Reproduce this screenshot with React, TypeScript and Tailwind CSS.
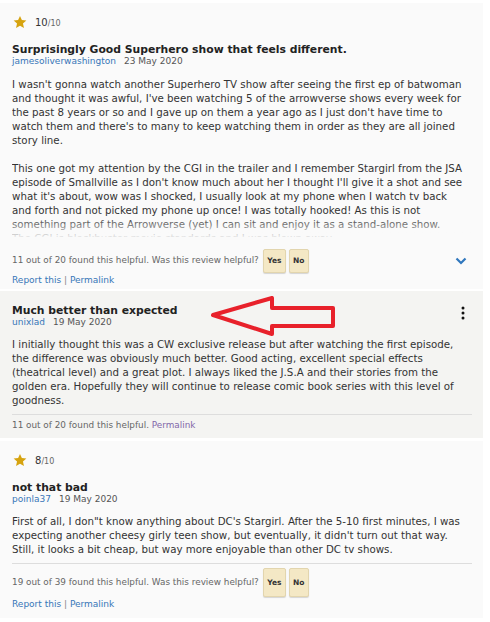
import React from 'react'

type Review = {
  rating?: string
  title: string
  author: string
  date: string
  // lines as laid out in the original, paragraphs split by an empty string
  lines: string[]
}

function Star() {
  return (
    <svg width="14" height="14" viewBox="0 0 24 24" className="shrink-0">
      <path
        d="M12 1.5l3.2 7.1 7.7.8-5.8 5.2 1.7 7.6L12 18.3l-6.8 3.9 1.7-7.6L1.1 9.4l7.7-.8z"
        fill="#d6a30f"
      />
    </svg>
  )
}

function Rating({ value }: { value: string }) {
  return (
    <div className="flex h-4 items-center gap-2 pl-px">
      <Star />
      <span className="text-[10px] text-[#333]">
        {value}
        <span className="text-[8px] text-[#666]">/10</span>
      </span>
    </div>
  )
}

function VoteButtons({ tall }: { tall?: boolean }) {
  const base =
    'flex items-center justify-center rounded-[2px] border border-[#e2d5ae] bg-[#f4e8c5] text-[7.5px] font-bold text-[#333] shadow-[0_1px_1px_rgba(0,0,0,0.15)]'
  return (
    <div className="ml-1 flex gap-[3px]">
      <div className={`${base} w-[23px] ${tall ? 'h-[29px]' : 'h-6'}`}>Yes</div>
      <div className={`${base} w-5 ${tall ? 'h-[29px]' : 'h-6'}`}>No</div>
    </div>
  )
}

function Header({ review }: { review: Review }) {
  return (
    <>
      <h3 className="text-[10.8px] leading-[14px] font-bold text-[#222]">{review.title}</h3>
      <div className="flex h-[10px] items-center text-[9px]">
        <span className="text-[#3776b8]">{review.author}</span>
        <span className="ml-2 text-[#555]">{review.date}</span>
      </div>
    </>
  )
}

function Body({ lines }: { lines: string[] }) {
  return (
    <>
      {lines.map((line, i) => (
        <div key={i} className="h-[14px] whitespace-nowrap">
          {line}
        </div>
      ))}
    </>
  )
}

function Links() {
  return (
    <div className="text-[9px] leading-[12px] text-[#3776b8]">
      Report this <span className="text-[#888]">|</span> Permalink
    </div>
  )
}

const reviews: Review[] = [
  {
    rating: '10',
    title: 'Surprisingly Good Superhero show that feels different.',
    author: 'jamesoliverwashington',
    date: '23 May 2020',
    lines: [
      "I wasn't gonna watch another Superhero TV show after seeing the first ep of batwoman",
      "and thought it was awful, I've been watching 5 of the arrowverse shows every week for",
      "the past 8 years or so and I gave up on them a year ago as I just don't have time to",
      "watch them and there's to many to keep watching them in order as they are all joined",
      'story line.',
      '',
      'This one got my attention by the CGI in the trailer and I remember Stargirl from the JSA',
      "episode of Smallville as I don't know much about her I thought I'll give it a shot and see",
      "what it's about, wow was I shocked, I usually look at my phone when I watch tv back",
      'and forth and not picked my phone up once! I was totally hooked! As this is not',
      'something part of the Arrowverse (yet) I can sit and enjoy it as a stand-alone show.',
      'The CGI is blockbuster movie standards and I was blown away.',
    ],
  },
  {
    title: 'Much better than expected',
    author: 'unixlad',
    date: '19 May 2020',
    lines: [
      'I initially thought this was a CW exclusive release but after watching the first episode,',
      'the difference was obviously much better. Good acting, excellent special effects',
      '(theatrical level) and a great plot. I always liked the J.S.A and their stories from the',
      'golden era. Hopefully they will continue to release comic book series with this level of',
      'goodness.',
    ],
  },
  {
    rating: '8',
    title: 'not that bad',
    author: 'poinla37',
    date: '19 May 2020',
    lines: [
      'First of all, I don"t know anything about DC\'s Stargirl. After the 5-10 first minutes, I was',
      "expecting another cheesy girly teen show, but eventually, it didn't turn out that way.",
      'Still, it looks a bit cheap, but way more enjoyable than other DC tv shows.',
    ],
  },
]

const bodyText = 'text-[10.25px] leading-[14px] text-[#333]'

export default function App() {
  const [first, second, third] = reviews

  return (
    <div className="min-h-screen w-[490px] bg-white pt-[3px] font-['DejaVu_Sans',sans-serif]">
      {/* collapsed review */}
      <div className="w-[483px] bg-[#fafafa] pt-[11px] pr-[11px] pb-[3px] pl-3">
        <Rating value={first.rating!} />
        <div className="mt-[13px]">
          <Header review={first} />
        </div>
        <div className={`relative mt-[10px] h-[160px] overflow-hidden ${bodyText}`}>
          <Body lines={first.lines} />
          <div className="absolute inset-x-0 bottom-0 h-5 bg-gradient-to-b from-[#fafafa]/0 to-[#fafafa]/90" />
        </div>
        <div className="mt-3 flex items-center">
          <span className="text-[8.85px] text-[#666]">
            11 out of 20 found this helpful. Was this review helpful?
          </span>
          <VoteButtons />
          <svg width="12" height="8" viewBox="0 0 12 8" className="mr-[5px] ml-auto">
            <path d="M1.5 1.5L6 6l4.5-4.5" fill="none" stroke="#2f77bd" strokeWidth="2.2" />
          </svg>
        </div>
        <div className="mt-px">
          <Links />
        </div>
      </div>

      {/* highlighted review */}
      <div className="relative mt-[2px] w-[483px] bg-[#f4f4f2] pt-[13px] pr-[11px] pb-[7px] pl-3">
        <div className="flex items-start justify-between">
          <div>
            <Header review={second} />
          </div>
          <svg width="4" height="14" viewBox="0 0 4 14" className="mt-[2px] mr-[7px]">
            <circle cx="2" cy="2" r="1.5" fill="#111" />
            <circle cx="2" cy="7" r="1.5" fill="#111" />
            <circle cx="2" cy="12" r="1.5" fill="#111" />
          </svg>
        </div>
        <div className={`mt-[9px] ${bodyText}`}>
          <Body lines={second.lines} />
        </div>
        <div className="mt-[7px] border-t border-[#ddd] pt-1 text-[8.85px] leading-[12px] text-[#666]">
          11 out of 20 found this helpful. <span className="text-[#8167a9]">Permalink</span>
        </div>
        <svg
          width="126"
          height="42"
          viewBox="0 0 126 42"
          className="pointer-events-none absolute top-[5px] left-[211px]"
        >
          <path
            d="M2 19L61 2V12H122V30H61V38Z"
            fill="none"
            stroke="#e8212b"
            strokeWidth="4"
            strokeLinejoin="round"
          />
        </svg>
      </div>

      {/* last review */}
      <div className="mt-[3px] w-[483px] bg-[#fafafa] pt-[11px] pr-[11px] pb-2 pl-3">
        <Rating value={third.rating!} />
        <div className="mt-[13px]">
          <Header review={third} />
        </div>
        <div className={`mt-[9px] ${bodyText}`}>
          <Body lines={third.lines} />
        </div>
        <div className="mt-[7px] flex items-center border-t border-[#ddd] pt-1">
          <span className="text-[8.85px] text-[#666]">
            19 out of 39 found this helpful. Was this review helpful?
          </span>
          <VoteButtons tall />
        </div>
        <div className="mt-px">
          <Links />
        </div>
      </div>
    </div>
  )
}
